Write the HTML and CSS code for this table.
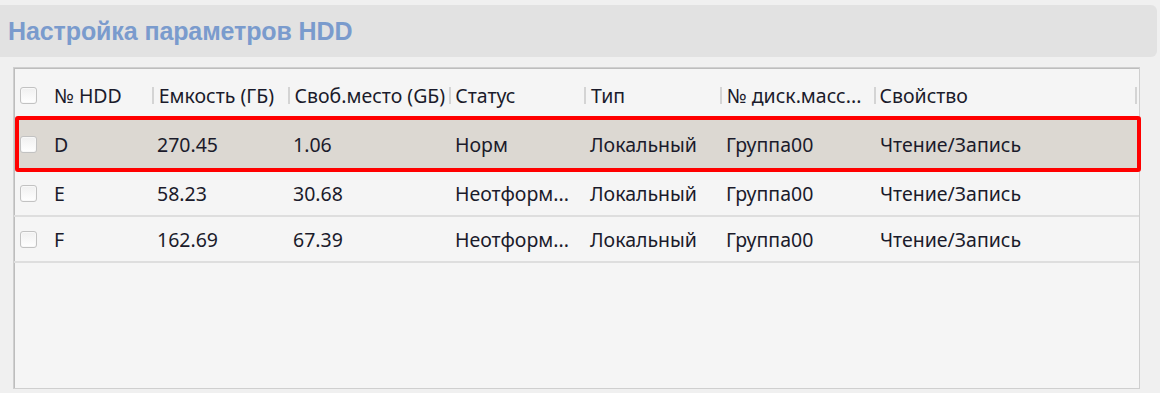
FILE: index.html
```html
<!DOCTYPE html>
<html lang="ru">
<head>
<meta charset="utf-8">
<link rel="stylesheet" href="styles.css">
</head>
<body>
<div class="page">
  <div class="titlebar"><h1 class="title">Настройка параметров HDD</h1></div>
  <div class="tablebox">
    <div class="row head">
      <div class="c cb"><span class="check"></span></div>
      <div class="c c1">№ HDD</div>
      <div class="c c2"><i class="sep"></i>Емкость (ГБ)</div>
      <div class="c c3"><i class="sep"></i>Своб.место (GБ)</div>
      <div class="c c4"><i class="sep"></i>Статус</div>
      <div class="c c5"><i class="sep"></i>Тип</div>
      <div class="c c6"><i class="sep"></i>№ диск.масс...</div>
      <div class="c c7"><i class="sep"></i>Свойство</div>
      <div class="c c8"><i class="sep"></i></div>
    </div>
    <div class="row sel">
      <div class="c cb"><span class="check"></span></div>
      <div class="c c1">D</div>
      <div class="c c2">270.45</div>
      <div class="c c3">1.06</div>
      <div class="c c4">Норм</div>
      <div class="c c5">Локальный</div>
      <div class="c c6">Группа00</div>
      <div class="c c7">Чтение/Запись</div>
    </div>
    <div class="row data">
      <div class="c cb"><span class="check"></span></div>
      <div class="c c1">E</div>
      <div class="c c2">58.23</div>
      <div class="c c3">30.68</div>
      <div class="c c4">Неотформ...</div>
      <div class="c c5">Локальный</div>
      <div class="c c6">Группа00</div>
      <div class="c c7">Чтение/Запись</div>
    </div>
    <div class="row data">
      <div class="c cb"><span class="check"></span></div>
      <div class="c c1">F</div>
      <div class="c c2">162.69</div>
      <div class="c c3">67.39</div>
      <div class="c c4">Неотформ...</div>
      <div class="c c5">Локальный</div>
      <div class="c c6">Группа00</div>
      <div class="c c7">Чтение/Запись</div>
    </div>
  </div>
</div>
</body>
</html>
```
FILE: styles.css
```css
html, body {
  margin: 0;
  padding: 0;
  background: #f0f0f0;
}
body {
  width: 1160px;
  height: 393px;
  overflow: hidden;
  font-family: "Noto Sans", "Liberation Sans", sans-serif;
}
.page {
  padding-top: 5px;
}
.titlebar {
  height: 52px;
  width: 1157px;
  background: #e2e2e2;
  border-radius: 0 6px 6px 0;
  display: flex;
  align-items: center;
}
.title {
  margin: 0 0 0 8px;
  font-family: "Liberation Sans", Arial, sans-serif;
  font-weight: bold;
  font-size: 25px;
  letter-spacing: -0.1px;
  color: #7a9bcd;
  padding-top: 1px;
}
.tablebox {
  margin: 10px 0 0 13px;
  width: 1127px;
  height: 322px;
  border: 1px solid #cfcfcf;
  box-shadow: inset 1px 1px 0 #bdbdbd;
  background: #f5f5f5;
  box-sizing: border-box;
  padding-top: 1px;
}
.row {
  display: flex;
  align-items: center;
  height: 45px;
  font-size: 19.5px;
  color: #1b1b2b;
  box-sizing: border-box;
}
.row.head {
  height: 47px;
  padding-top: 5px;
}
.row.sel {
  height: 56px;
  margin-left: 1px;
  margin-right: -2px;
  border: 4px solid #ff0000;
  border-radius: 3px;
  background: #dcd8d2;
}
.row.data {
  border-bottom: 2px solid #dedede;
}
.row.data + .row.data {
  height: 46px;
  padding-top: 1px;
}
.c {
  position: relative;
  white-space: nowrap;
  box-sizing: border-box;
}
.cb { width: 40px; padding-left: 6px; display: flex; }
.c1 { width: 98px; }
.c2 { width: 136px; padding-left: 7px; }
.c3 { width: 162px; padding-left: 7px; }
.c4 { width: 135px; padding-left: 6px; }
.c5 { width: 136px; padding-left: 7px; }
.c6 { width: 154px; padding-left: 7px; }
.c7 { width: 262px; padding-left: 6px; }
.c8 { width: 4px; height: 20px; }
.sel .cb { width: 35px; padding-left: 1px; }
.sel .c2, .sel .c3, .sel .c4, .sel .c5, .sel .c6, .sel .c7 { padding-left: 5px; }
.data .c2, .data .c3, .data .c4, .data .c5, .data .c6, .data .c7 { padding-left: 5px; }
.sep {
  position: absolute;
  left: 0;
  top: 50%;
  margin-top: -8px;
  width: 2px;
  height: 17px;
  background: #d4d4d4;
}
.check {
  width: 17px;
  height: 17px;
  box-sizing: border-box;
  border: 1px solid #c2c2c2;
  border-radius: 3px;
  background: linear-gradient(#f0f0f0, #ffffff);
  box-shadow: inset 0 0 0 1px #f8f8f8;
}
```
